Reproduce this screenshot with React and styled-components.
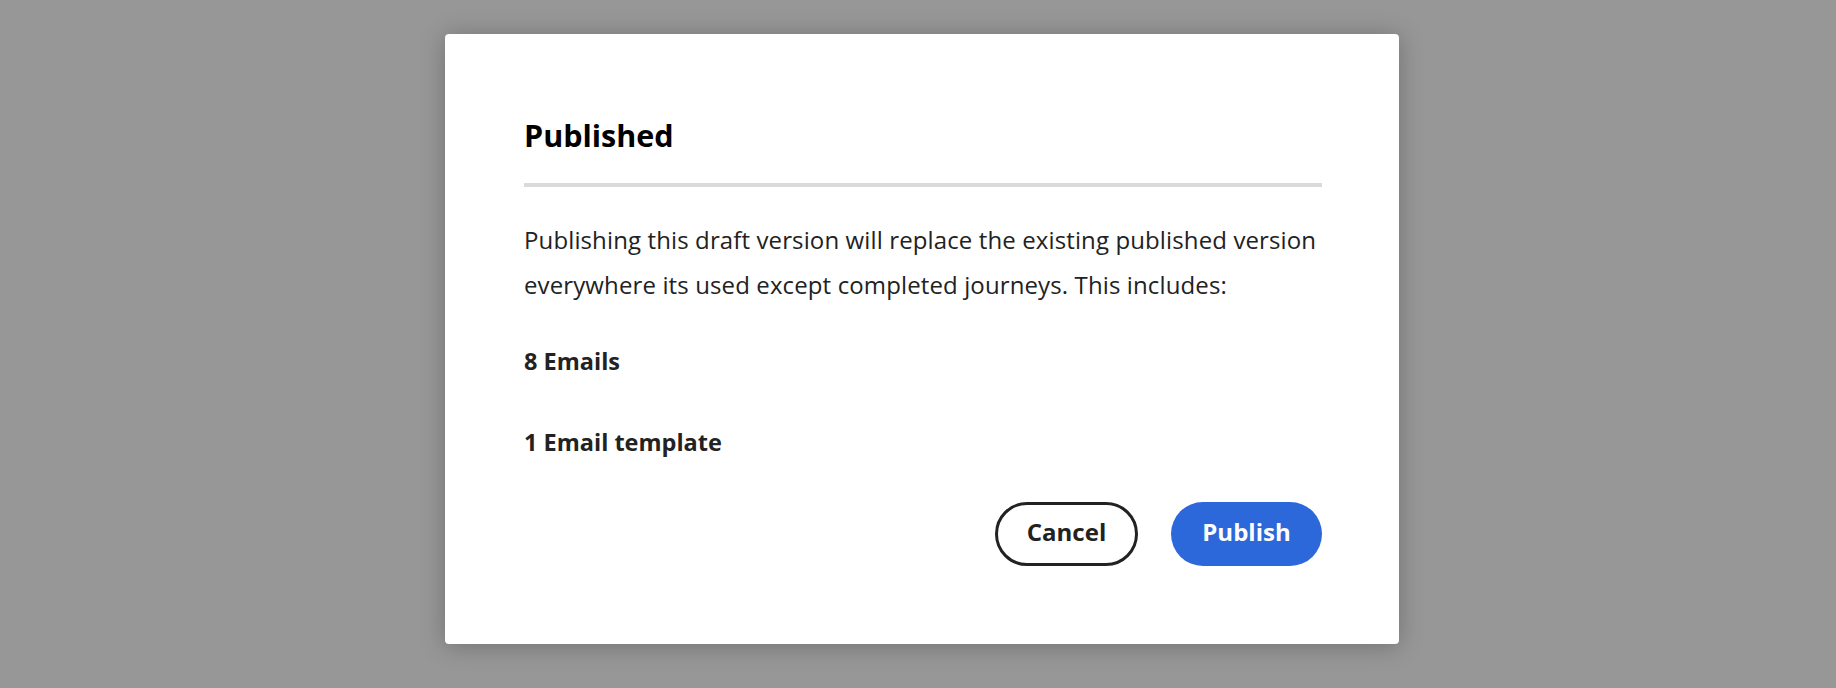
import React from 'react';
import styled, { createGlobalStyle } from 'styled-components';

const GlobalStyle = createGlobalStyle`
    html, body {
        margin: 0;
        padding: 0;
        background: #979797;
    }
    body {
        font-family: 'Open Sans', 'Noto Sans', sans-serif;
        -webkit-font-smoothing: antialiased;
    }
`;

const Overlay = styled.div`
    width: 100%;
    height: 688px;
    background: #979797;
    display: flex;
    justify-content: center;
    align-items: flex-start;
    padding: 34px 0 0 8px;
    box-sizing: border-box;
`;

const Dialog = styled.div`
    width: 954px;
    height: 610px;
    box-sizing: border-box;
    padding: 81px 77px 0 79px;
    background: #fff;
    border-radius: 4px;
    box-shadow: 0 2px 24px rgba(0, 0, 0, 0.25);
    display: flex;
    flex-direction: column;
`;

const Heading = styled.h2`
    margin: 0;
    font-size: 30.5px;
    line-height: 40px;
    font-weight: 700;
    color: #000;
`;

const Divider = styled.hr`
    margin: 28px 0 0;
    border: none;
    height: 4px;
    background: #dadada;
`;

const Body = styled.p`
    margin: 30px 0 0;
    font-size: 24px;
    letter-spacing: 0.12px;
    line-height: 45px;
    color: #222;
`;

const Item = styled.div`
    margin-top: ${p => p.$gap}px;
    font-size: 23.5px;
    line-height: 30px;
    font-weight: 700;
    color: #222;
`;

const Footer = styled.div`
    margin-top: 45px;
    display: flex;
    justify-content: flex-end;
    gap: 33px;
`;

const Button = styled.button`
    height: 64px;
    min-width: ${p => p.$width}px;
    box-sizing: border-box;
    padding: 0 0 5px;
    border-radius: 32px;
    font-family: inherit;
    font-size: 24px;
    font-weight: 700;
    cursor: pointer;
    border: ${p => (p.$primary ? 'none' : '3px solid #222')};
    background: ${p => (p.$primary ? '#2d68db' : '#fff')};
    color: ${p => (p.$primary ? '#fff' : '#222')};
`;

export default function App() {
    return (
        <>
            <GlobalStyle />
            <Overlay>
                <Dialog>
                    <Heading>Published</Heading>
                    <Divider />
                    <Body>
                        Publishing this draft version will replace the existing published version
                        everywhere its used except completed journeys. This includes:
                    </Body>
                    <Item $gap={39}>8 Emails</Item>
                    <Item $gap={51}>1 Email template</Item>
                    <Footer>
                        <Button $width={143}>Cancel</Button>
                        <Button $primary $width={151}>Publish</Button>
                    </Footer>
                </Dialog>
            </Overlay>
        </>
    );
}
